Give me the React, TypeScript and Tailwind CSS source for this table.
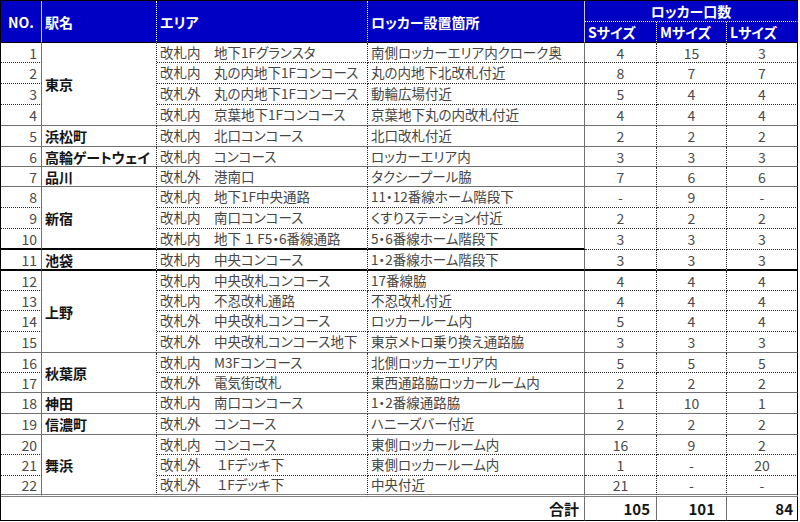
import clsx from "clsx";

type Line = "dot" | "solid" | "thick" | "thickLeft" | "double";

type Row = {
  no: number;
  station?: string;
  span?: number;
  area: string;
  place: string;
  s: string;
  m: string;
  l: string;
  line: Line;
};

const rows: Row[] = [
  { no: 1, station: "東京", span: 4, area: "改札内　地下1Fグランスタ", place: "南側ロッカーエリア内クローク奥", s: "4", m: "15", l: "3", line: "dot" },
  { no: 2, area: "改札内　丸の内地下1Fコンコース", place: "丸の内地下北改札付近", s: "8", m: "7", l: "7", line: "dot" },
  { no: 3, area: "改札外　丸の内地下1Fコンコース", place: "動輪広場付近", s: "5", m: "4", l: "4", line: "dot" },
  { no: 4, area: "改札内　京葉地下1Fコンコース", place: "京葉地下丸の内改札付近", s: "4", m: "4", l: "4", line: "solid" },
  { no: 5, station: "浜松町", span: 1, area: "改札内　北口コンコース", place: "北口改札付近", s: "2", m: "2", l: "2", line: "solid" },
  { no: 6, station: "高輪ゲートウェイ", span: 1, area: "改札内　コンコース", place: "ロッカーエリア内", s: "3", m: "3", l: "3", line: "solid" },
  { no: 7, station: "品川", span: 1, area: "改札外　港南口", place: "タクシープール脇", s: "7", m: "6", l: "6", line: "solid" },
  { no: 8, station: "新宿", span: 3, area: "改札内　地下1F中央通路", place: "11・12番線ホーム階段下", s: "-", m: "9", l: "-", line: "dot" },
  { no: 9, area: "改札内　南口コンコース", place: "くすりステーション付近", s: "2", m: "2", l: "2", line: "dot" },
  { no: 10, area: "改札内　地下 １ F5・6番線通路", place: "5・6番線ホーム階段下", s: "3", m: "3", l: "3", line: "thickLeft" },
  { no: 11, station: "池袋", span: 1, area: "改札内　中央コンコース", place: "1・2番線ホーム階段下", s: "3", m: "3", l: "3", line: "thick" },
  { no: 12, station: "上野", span: 4, area: "改札内　中央改札コンコース", place: "17番線脇", s: "4", m: "4", l: "4", line: "dot" },
  { no: 13, area: "改札内　不忍改札通路", place: "不忍改札付近", s: "4", m: "4", l: "4", line: "dot" },
  { no: 14, area: "改札外　中央改札コンコース", place: "ロッカールーム内", s: "5", m: "4", l: "4", line: "dot" },
  { no: 15, area: "改札外　中央改札コンコース地下", place: "東京メトロ乗り換え通路脇", s: "3", m: "3", l: "3", line: "solid" },
  { no: 16, station: "秋葉原", span: 2, area: "改札内　M3Fコンコース", place: "北側ロッカーエリア内", s: "5", m: "5", l: "5", line: "dot" },
  { no: 17, area: "改札外　電気街改札", place: "東西通路脇ロッカールーム内", s: "2", m: "2", l: "2", line: "solid" },
  { no: 18, station: "神田", span: 1, area: "改札内　南口コンコース", place: "1・2番線通路脇", s: "1", m: "10", l: "1", line: "solid" },
  { no: 19, station: "信濃町", span: 1, area: "改札外　コンコース", place: "ハニーズバー付近", s: "2", m: "2", l: "2", line: "solid" },
  { no: 20, station: "舞浜", span: 3, area: "改札内　コンコース", place: "東側ロッカールーム内", s: "16", m: "9", l: "2", line: "dot" },
  { no: 21, area: "改札外　 １Fデッキ下", place: "東側ロッカールーム内", s: "1", m: "-", l: "20", line: "dot" },
  { no: 22, area: "改札外　 １Fデッキ下", place: "中央付近", s: "21", m: "-", l: "-", line: "double" },
];

// bottom borders
const bDot = "border-b border-b-[#2a2a2a] [border-bottom-style:dotted]";
const bSolid = "border-b border-b-[#707070]";
const bThick = "border-b-2 border-b-black";
const bDouble = "border-b-[3px] border-b-[#808080] [border-bottom-style:double]";

// right borders
const rSolid = "border-r border-r-[#707070]";
const rDot = "border-r border-r-[#2a2a2a] [border-right-style:dotted]";
const rBlack = "border-r border-r-black";

const bottomFor = (line: Line, numeric: boolean) => {
  if (line === "dot") return bDot;
  if (line === "solid") return bSolid;
  if (line === "thick") return bThick;
  if (line === "thickLeft") return numeric ? bDot : bThick;
  return bDouble;
};

const spanClass: Record<number, string> = {
  1: "row-span-1",
  2: "row-span-2",
  3: "row-span-3",
  4: "row-span-4",
};

const groupEnd = (i: number, span: number) => rows[i + span - 1].line;

const cell = "flex items-center whitespace-nowrap";
const num = "text-[14px] text-[#4a4a4a]";
const head = "flex items-center whitespace-nowrap bg-[#0000c4] font-bold text-white text-[14px]";
const total = "text-[15px] font-bold text-[#141414] border-b border-b-black";

export default function App() {
  return (
    <div className="w-[800px] h-[522px] bg-white font-['Noto_Sans_CJK_JP',sans-serif] text-[13.5px] leading-none [font-feature-settings:'palt']">
      <div className="w-fit border-t border-l border-black">
        <div className="grid grid-cols-[41px_115px_211px_217px_72px_70px_71px] grid-rows-[21px_21px_20px_21px_21px_21px_21px_20px_20px_21px_21px_21px_21px_20px_20px_21px_21px_20px_20px_21px_21px_20px_21px_21px_24px]">
          {/* header */}
          <div className={clsx(head, "row-span-2 justify-center border-r border-r-[#c8c8e8] border-b border-b-black")}>NO.</div>
          <div className={clsx(head, "row-span-2 pl-[3px] border-r border-r-white [border-right-style:dotted] border-b border-b-black")}>駅名</div>
          <div className={clsx(head, "row-span-2 pl-[3px] border-r border-r-white [border-right-style:dotted] border-b border-b-black")}>エリア</div>
          <div className={clsx(head, "row-span-2 pl-[3px] border-r border-r-[#c8c8c8] border-b border-b-black")}>ロッカー設置箇所</div>
          <div className={clsx(head, "col-span-3 justify-center border-b border-b-white [border-bottom-style:dotted] border-r border-r-black")}>ロッカー口数</div>
          <div className={clsx(head, "pl-[3px] border-r border-r-white [border-right-style:dotted] border-b border-b-black")}>Sサイズ</div>
          <div className={clsx(head, "pl-[3px] border-r border-r-white [border-right-style:dotted] border-b border-b-black")}>Mサイズ</div>
          <div className={clsx(head, "pl-[3px] border-r border-r-black border-b border-b-black")}>Lサイズ</div>

          {/* data rows */}
          {rows.map((r, i) => (
            <>
              <div key={`no${r.no}`} className={clsx(cell, num, "justify-end pr-[4px]", rSolid, bottomFor(r.line, false))}>
                {r.no}
              </div>
              {r.station && (
                <div
                  key={`st${r.no}`}
                  className={clsx(cell, "pl-[3px] text-[14px] font-bold text-[#141414]", spanClass[r.span ?? 1], rDot, bottomFor(groupEnd(i, r.span ?? 1), false))}
                >
                  {r.station}
                </div>
              )}
              <div key={`ar${r.no}`} className={clsx(cell, "pl-[3px] text-[#454545]", rDot, bottomFor(r.line, false))}>
                {r.area}
              </div>
              <div key={`pl${r.no}`} className={clsx(cell, "pl-[3px] text-[#454545]", rSolid, bottomFor(r.line, false))}>
                {r.place}
              </div>
              <div key={`s${r.no}`} className={clsx(cell, num, "justify-center", rDot, bottomFor(r.line, true))}>
                {r.s}
              </div>
              <div key={`m${r.no}`} className={clsx(cell, num, "justify-center", rDot, bottomFor(r.line, true))}>
                {r.m}
              </div>
              <div key={`l${r.no}`} className={clsx(cell, num, "justify-center", rBlack, bottomFor(r.line, true))}>
                {r.l}
              </div>
            </>
          ))}

          {/* total */}
          <div className={clsx(cell, total, "col-span-4 justify-end pr-[5px] text-[14px]", rSolid)}>合計</div>
          <div className={clsx(cell, total, "justify-end pr-[6px]", rSolid)}>105</div>
          <div className={clsx(cell, total, "justify-end pr-[11px]", rSolid)}>101</div>
          <div className={clsx(cell, total, "justify-end pr-[4px]", rBlack)}>84</div>
        </div>
      </div>
    </div>
  );
}
